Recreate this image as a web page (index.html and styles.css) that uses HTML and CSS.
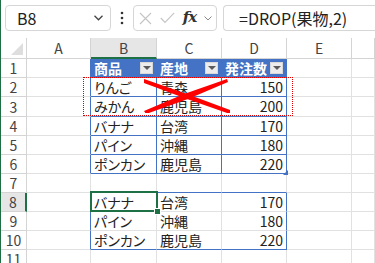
FILE: index.html
```html
<!doctype html>
<html lang="ja">
  <head>
    <meta charset="UTF-8" />
    <title>DROP</title>
    <link rel="stylesheet" href="styles.css">
  </head>
  <body>
    <div class="toolbar">
      <div class="namebox">
        <span>B8</span>
        <svg class="chev" width="9" height="6" viewBox="0 0 9 6"><path d="M0.5 0.8 L4.5 4.8 L8.5 0.8" fill="none" stroke="#444" stroke-width="1.3"/></svg>
      </div>
      <div class="grip">
        <svg width="4" height="14" viewBox="0 0 4 14"><circle cx="2" cy="2" r="1.3" fill="#333"/><circle cx="2" cy="7" r="1.3" fill="#333"/><circle cx="2" cy="12" r="1.3" fill="#333"/></svg>
      </div>
      <div class="fxbox">
        <svg width="13" height="13" viewBox="0 0 13 13"><path d="M1 1 L12 12 M12 1 L1 12" stroke="#c4c4c4" stroke-width="1.1"/></svg>
        <svg width="15" height="12" viewBox="0 0 15 12"><path d="M0.8 6 L5 10.5 L14.2 0.8" fill="none" stroke="#c4c4c4" stroke-width="1.1"/></svg>
        <span class="fx">fx</span>
        <svg width="8" height="5" viewBox="0 0 8 5"><path d="M0.5 0.5 L4 4 L7.5 0.5" fill="none" stroke="#888" stroke-width="1"/></svg>
      </div>
      <div class="formula">=DROP(果物,2)</div>
    </div>

    <div class="sheet">
      <div class="corner"></div>
      <div class="colhead">A</div>
      <div class="colhead sel">B</div>
      <div class="colhead">C</div>
      <div class="colhead">D</div>
      <div class="colhead">E</div>
      <div class="colhead"></div>

      <div class="rowhead">1</div>
      <div class="cell tl"></div>
      <div class="cell th">商品<i class="drop"></i></div>
      <div class="cell th">産地<i class="drop"></i></div>
      <div class="cell th">発注数<i class="drop"></i></div>
      <div class="cell"></div>
      <div class="cell"></div>

      <div class="rowhead">2</div>
      <div class="cell tl"></div>
      <div class="cell t">りんご</div>
      <div class="cell t">青森</div>
      <div class="cell t num">150</div>
      <div class="cell"></div>
      <div class="cell"></div>

      <div class="rowhead">3</div>
      <div class="cell tl"></div>
      <div class="cell t">みかん</div>
      <div class="cell t">鹿児島</div>
      <div class="cell t num">200</div>
      <div class="cell"></div>
      <div class="cell"></div>

      <div class="rowhead">4</div>
      <div class="cell tl"></div>
      <div class="cell t">バナナ</div>
      <div class="cell t">台湾</div>
      <div class="cell t num">170</div>
      <div class="cell"></div>
      <div class="cell"></div>

      <div class="rowhead">5</div>
      <div class="cell tl"></div>
      <div class="cell t">パイン</div>
      <div class="cell t">沖縄</div>
      <div class="cell t num">180</div>
      <div class="cell"></div>
      <div class="cell"></div>

      <div class="rowhead">6</div>
      <div class="cell tl"></div>
      <div class="cell t">ポンカン</div>
      <div class="cell t">鹿児島</div>
      <div class="cell t num last">220</div>
      <div class="cell"></div>
      <div class="cell"></div>

      <div class="rowhead">7</div>
      <div class="cell"></div>
      <div class="cell sb"></div>
      <div class="cell sb"></div>
      <div class="cell sb"></div>
      <div class="cell"></div>
      <div class="cell"></div>

      <div class="rowhead sel">8</div>
      <div class="cell tl"></div>
      <div class="cell">バナナ</div>
      <div class="cell">台湾</div>
      <div class="cell num sr">170</div>
      <div class="cell"></div>
      <div class="cell"></div>

      <div class="rowhead">9</div>
      <div class="cell tl"></div>
      <div class="cell">パイン</div>
      <div class="cell">沖縄</div>
      <div class="cell num sr">180</div>
      <div class="cell"></div>
      <div class="cell"></div>

      <div class="rowhead">10</div>
      <div class="cell tl"></div>
      <div class="cell sb">ポンカン</div>
      <div class="cell sb">鹿児島</div>
      <div class="cell num sr sb">220</div>
      <div class="cell"></div>
      <div class="cell"></div>

      <div class="rowhead">11</div>
      <div class="cell"></div>
      <div class="cell"></div>
      <div class="cell"></div>
      <div class="cell"></div>
      <div class="cell"></div>
      <div class="cell"></div>

      <!-- copy marquee over the two dropped rows -->
      <div class="marquee"></div>
      <svg class="cross" width="86" height="34" viewBox="0 0 86 34">
        <path d="M0 0 L43 15 L86 31 L86 35 L43 20 L0 4 Z" fill="#f00"/>
        <path d="M0 32 L40 15 L83 0 L84 3 L44 20 L2 35 Z" fill="#f00"/>
      </svg>

      <!-- active cell -->
      <div class="active"><span class="handle"></span></div>
    </div>
  </body>
</html>
```

FILE: styles.css
```css
* {
  box-sizing: border-box;
}

body {
  margin: 0;
  height: 263px;
  overflow: hidden;
  background: #fff;
  border-left: 1px solid #1e6e43;
  font-family: "Noto Sans CJK JP", sans-serif;
  color: #222;
}

/* formula bar */
.toolbar {
  display: flex;
  align-items: center;
  height: 38px;
  padding: 5px 0 7px 4px;
}

.toolbar > * {
  flex: none;
}

.namebox,
.fxbox,
.formula {
  height: 26px;
  border: 1px solid #d6d6d6;
  border-radius: 4px;
  background: #fff;
  display: flex;
  align-items: center;
}

.namebox {
  width: 106px;
  padding: 0 7px 0 11px;
  justify-content: space-between;
  font-size: 16px;
}

.grip {
  width: 22px;
  display: flex;
  justify-content: center;
}

.fxbox {
  width: 84px;
  padding: 0 4px 0 5px;
  justify-content: space-between;
}

.fx {
  font-family: "DejaVu Serif", serif;
  font-style: italic;
  font-weight: bold;
  font-size: 15px;
  letter-spacing: -1px;
  color: #333;
  margin-top: -2px;
}

.toolbar > .formula {
  flex: 1;
  min-width: 0;
  margin-left: 6px;
  padding-left: 15px;
  font-size: 16px;
  border-right: none;
  border-radius: 4px 0 0 4px;
}

/* grid */
.sheet {
  position: relative;
  display: grid;
  grid-template-columns: 26px 64px 66px 65px 65px 65px 1fr;
  grid-template-rows: 21px 19px 19px 20px repeat(8, 19px);
  font-size: 14px;
  font-feature-settings: "palt";
}

.corner {
  border-right: 1px solid #d4d4d4;
  border-bottom: 1px solid #d4d4d4;
  position: relative;
}

.corner::after {
  content: "";
  position: absolute;
  right: 3px;
  bottom: 3px;
  border-left: 12px solid transparent;
  border-bottom: 12px solid #dedede;
}

.colhead,
.rowhead {
  display: flex;
  align-items: center;
  justify-content: center;
  color: #444;
  border-right: 1px solid #d4d4d4;
  border-bottom: 1px solid #d4d4d4;
  font-size: 14px;
}

.colhead.sel {
  background: #e6e6e6;
  border-bottom: 2px solid #1e7145;
}

.rowhead.sel {
  background: #e6e6e6;
  border-right: 2px solid #1e7145;
}

.cell {
  display: flex;
  align-items: center;
  padding: 0 3px 1px;
  border-right: 1px solid #e1e1e1;
  border-bottom: 1px solid #e1e1e1;
  white-space: nowrap;
}

.cell.num {
  justify-content: flex-end;
}

.cell.t {
  border-color: #4472c4;
}

.cell.tl {
  border-right-color: #4472c4;
}

.cell.sb {
  border-bottom-color: #4472c4;
}

.cell.sr {
  border-right-color: #4472c4;
}

.cell.th {
  background: #4472c4;
  border-color: #4472c4;
  color: #fff;
  font-weight: bold;
  justify-content: space-between;
  padding-right: 3px;
}

.drop {
  width: 13px;
  height: 12px;
  background: #ececec;
  border: 1px solid #d8d8d8;
  display: flex;
  align-items: center;
  justify-content: center;
}

.drop::after {
  content: "";
  border-left: 4px solid transparent;
  border-right: 4px solid transparent;
  border-top: 4px solid #5a5a5a;
}

.cell.last {
  position: relative;
}

.cell.last::after {
  content: "";
  position: absolute;
  right: -2px;
  bottom: -2px;
  border-left: 5px solid transparent;
  border-bottom: 5px solid #4472c4;
}

/* overlays */
.marquee {
  position: absolute;
  left: 82px;
  top: 39px;
  width: 210px;
  height: 39px;
  border: 1px dotted #e00000;
}

.cross {
  position: absolute;
  left: 143px;
  top: 41px;
}

.active {
  position: absolute;
  left: 89px;
  top: 153px;
  width: 68px;
  height: 21px;
  border: 2px solid #1e7145;
}

.handle {
  position: absolute;
  right: -5px;
  bottom: -5px;
  width: 7px;
  height: 7px;
  background: #1e7145;
  border: 1px solid #fff;
}
```
